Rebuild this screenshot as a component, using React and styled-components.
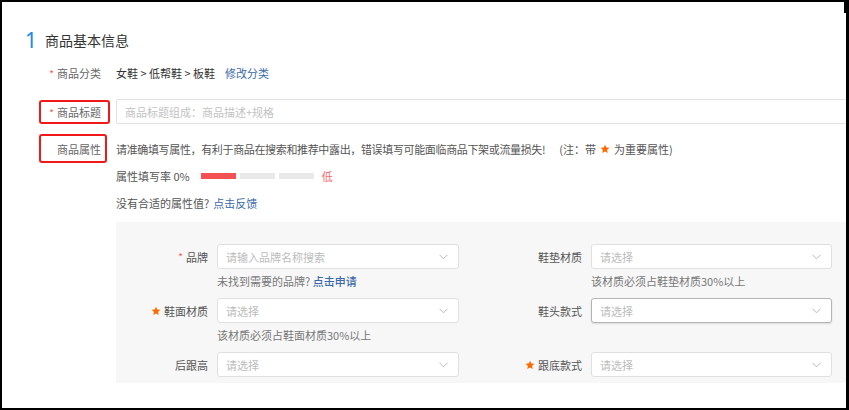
import React from "react";
import styled, { createGlobalStyle, css } from "styled-components";

const Global = createGlobalStyle`
  html, body { margin: 0; padding: 0; background: #fff; }
  body { font-family: "Noto Sans CJK SC", "Noto Sans", sans-serif; }
  * { box-sizing: border-box; }
`;

const Frame = styled.div`
  position: relative;
  width: 849px;
  height: 410px;
  border-style: solid;
  border-color: #000;
  border-width: 2px 3px 2px 2px;
  overflow: hidden;
  background: #fff;
  font-size: 11px;
  color: #555;
  &::after {
    content: "";
    position: absolute;
    right: 0;
    top: 0;
    width: 2px;
    height: 11px;
    background: #000;
  }
`;

const Page = styled.div`
  display: flex;
  flex-direction: column;
  padding: 26px 0 0 23px;
`;

const Heading = styled.div`
  display: flex;
  align-items: center;
  height: 24px;
  gap: 8px;
`;

const StepNo = styled.span`
  font-family: "Noto Sans", sans-serif;
  font-size: 21px;
  font-weight: 400;
  color: #1a88ee;
  line-height: 24px;
`;

const HeadingTitle = styled.span`
  font-size: 14px;
  color: #333;
  line-height: 24px;
`;

const Row = styled.div`
  display: flex;
  align-items: center;
  margin-top: ${(p) => p.$mt}px;
  height: ${(p) => p.$h}px;
  margin-left: ${(p) => p.$indent || 0}px;
`;

const Label = styled.div`
  position: relative;
  width: 76px;
  flex-shrink: 0;
  text-align: right;
  color: #666;
  margin-right: 15px;
`;

const Mark = styled.span`
  position: absolute;
  left: ${(p) => p.$l}px;
  top: ${(p) => p.$t}px;
  width: ${(p) => p.$w}px;
  height: ${(p) => p.$hh}px;
  border: 2px solid #f01818;
  border-radius: 3px;
  pointer-events: none;
`;

const Req = styled.span`
  color: #f55;
  font-size: 10px;
  margin-right: 3px;
`;

const Value = styled.span`
  color: #333;
  white-space: pre;
`;

const Link = styled.a`
  color: #3a6aa8;
  text-decoration: none;
  margin-left: ${(p) => p.$ml || 0}px;
  font-weight: ${(p) => (p.$bold ? 500 : 400)};
`;

const TitleInput = styled.div`
  flex: 1;
  height: 25px;
  margin-right: -6px;
  border: 1px solid #e2e2e2;
  border-radius: 2px;
  display: flex;
  align-items: center;
  padding-left: 8px;
  color: #c2c2c2;
`;

const Desc = styled.span`
  color: #555;
  letter-spacing: ${(p) => (p.$tight ? "-0.35px" : "0")};
`;

const Note = styled.span`
  color: #555;
  margin-left: 14px;
  display: inline-flex;
  align-items: center;
  gap: 4px;
`;

const Bars = styled.div`
  display: flex;
  gap: 4px;
  margin-left: 11px;
`;

const Bar = styled.div`
  width: 35px;
  height: 6px;
  background: ${(p) => (p.$on ? "#f45252" : "#e8e8e8")};
`;

const Level = styled.span`
  color: #f46a6a;
  margin-left: 8px;
`;

const Panel = styled.div`
  margin: 10px 0 0 91px;
  background: #f7f7f7;
  padding: 22px 13px 6px 0;
  display: grid;
  grid-template-columns: 343px 342px;
  column-gap: 31px;
  row-gap: 8px;
  align-items: start;
`;

const Field = styled.div`
  display: grid;
  grid-template-columns: 92px 1fr;
  column-gap: 9px;
  align-items: center;
`;

const FieldLabel = styled.div`
  text-align: right;
  color: #555;
  display: flex;
  justify-content: flex-end;
  align-items: center;
`;

const Select = styled.div`
  height: 25px;
  background: #fff;
  border: 1px solid #e0e0e0;
  border-radius: 3px;
  display: flex;
  align-items: center;
  justify-content: space-between;
  padding: 0 10px 0 8px;
  color: #bcbcbc;
  ${(p) =>
    p.$active &&
    css`
      border-color: #b4b4b4;
      box-shadow: 0 1px 2px rgba(0, 0, 0, 0.12);
    `}
`;

const Helper = styled.div`
  grid-column: 2;
  margin-top: 4px;
  line-height: 17px;
  color: #777;
`;

const Star = ({ size = 10 }) => (
  <svg width={size} height={size} viewBox="0 0 24 24" style={{ flexShrink: 0 }}>
    <path
      d="M12 1.5l3.1 6.9 7.4.7-5.6 5 1.7 7.4L12 17.7l-6.6 3.8 1.7-7.4-5.6-5 7.4-.7z"
      fill="#ff6a00"
    />
  </svg>
);

const StarWrap = styled.span`
  display: inline-flex;
  margin-right: 3px;
`;

const Chevron = () => (
  <svg width="9" height="6" viewBox="0 0 9 6">
    <path d="M0.5 0.8 L4.5 4.8 L8.5 0.8" fill="none" stroke="#b8b8b8" strokeWidth="1" />
  </svg>
);

const fields = [
  { label: "品牌", req: true, ph: "请输入品牌名称搜索", help: <>未找到需要的品牌? <Link $bold>点击申请</Link></> },
  { label: "鞋垫材质", ph: "请选择", help: "该材质必须占鞋垫材质30%以上" },
  { label: "鞋面材质", star: true, ph: "请选择", help: "该材质必须占鞋面材质30%以上" },
  { label: "鞋头款式", ph: "请选择", active: true },
  { label: "后跟高", ph: "请选择" },
  { label: "跟底款式", star: true, ph: "请选择" },
];

export default function App() {
  return (
    <>
      <Global />
      <Frame>
        <Page>
          <Heading>
            <StepNo>1</StepNo>
            <HeadingTitle>商品基本信息</HeadingTitle>
          </Heading>

          <Row $mt={12} $h={18}>
            <Label>
              <Req>*</Req>商品分类
            </Label>
            <Value>女鞋 &gt; 低帮鞋 &gt; 板鞋</Value>
            <Link $ml={10}>修改分类</Link>
          </Row>

          <Row $mt={17} $h={25}>
            <Label>
              <Req>*</Req>商品标题
              <Mark $l={14} $t={-4} $w={71} $hh={24} />
            </Label>
            <TitleInput>商品标题组成：商品描述+规格</TitleInput>
          </Row>

          <Row $mt={16} $h={18}>
            <Label>
              商品属性
              <Mark $l={14} $t={-7} $w={68} $hh={29} />
            </Label>
            <Desc $tight>请准确填写属性，有利于商品在搜索和推荐中露出，错误填写可能面临商品下架或流量损失!</Desc>
            <Note>
              (注：带 <Star /> 为重要属性)
            </Note>
          </Row>

          <Row $mt={9} $h={18} $indent={91}>
            <Desc>属性填写率 0%</Desc>
            <Bars>
              <Bar $on />
              <Bar />
              <Bar />
            </Bars>
            <Level>低</Level>
          </Row>

          <Row $mt={9} $h={18} $indent={91}>
            <Desc>没有合适的属性值?</Desc>
            <Link $ml={4}>点击反馈</Link>
          </Row>

          <Panel>
            {fields.map((f) => (
              <Field key={f.label}>
                <FieldLabel>
                  {f.req && <Req>*</Req>}
                  {f.star && (
                    <StarWrap>
                      <Star />
                    </StarWrap>
                  )}
                  {f.label}
                </FieldLabel>
                <Select $active={f.active}>
                  <span>{f.ph}</span>
                  <Chevron />
                </Select>
                {f.help && <Helper>{f.help}</Helper>}
              </Field>
            ))}
          </Panel>
        </Page>
      </Frame>
    </>
  );
}
